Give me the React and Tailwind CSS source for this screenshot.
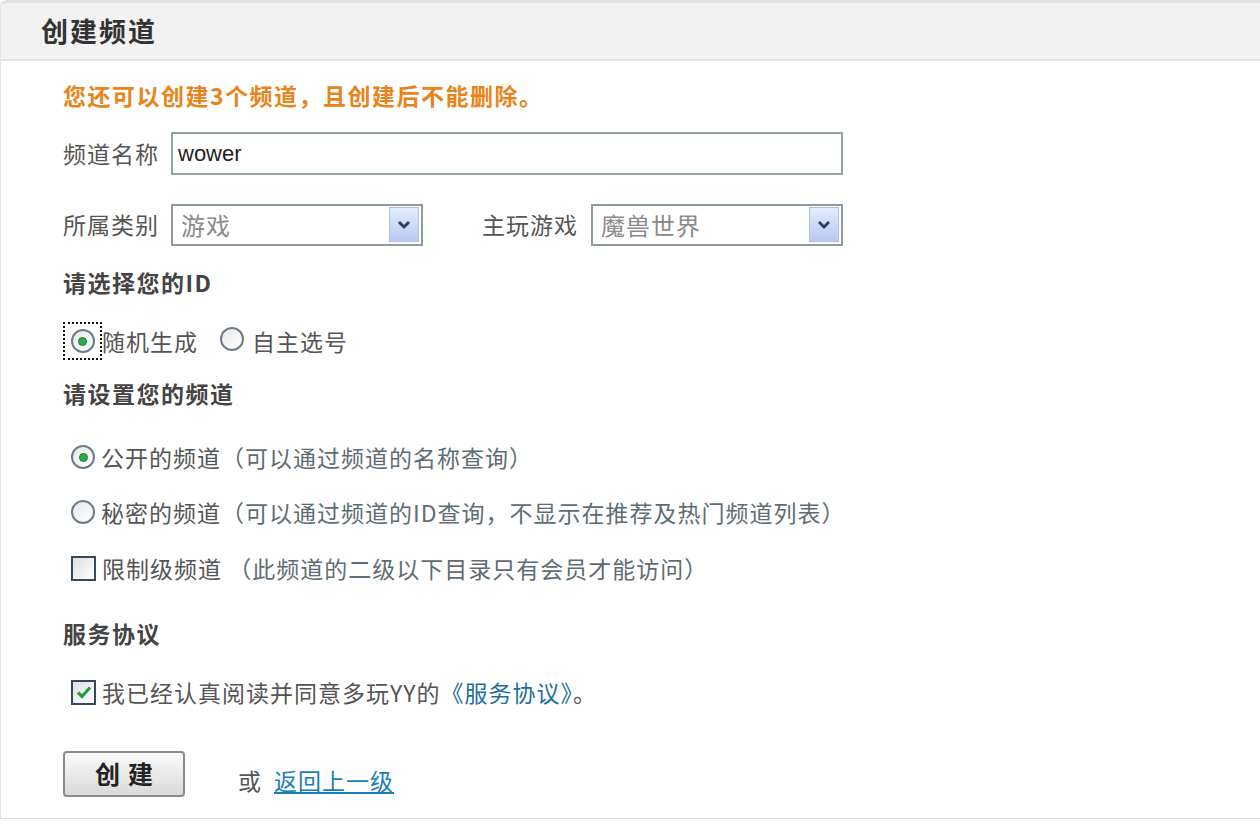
import React from 'react';

const font = { fontFamily: '"Noto Sans CJK SC", "Liberation Sans", sans-serif' };

const Radio = ({ checked }) => (
  <span className="inline-flex w-[24px] h-[24px] rounded-full border-2 border-[#6b7c88] bg-gradient-to-br from-[#e6e9ec] to-white items-center justify-center shrink-0">
    {checked && <span className="w-[9px] h-[9px] rounded-full bg-[#2fa84a] border border-[#1d7d33]"></span>}
  </span>
);

const Checkbox = ({ checked }) => (
  <span className="inline-flex w-[25px] h-[25px] border-2 border-[#34495a] bg-gradient-to-br from-[#dde0e3] to-white items-center justify-center shrink-0">
    {checked && (
      <svg width="16" height="14" viewBox="0 0 16 14">
        <path d="M2 7.5l4 4 8-9" fill="none" stroke="#23a03c" strokeWidth="3.2" />
      </svg>
    )}
  </span>
);

const Select = ({ value, width }) => (
  <div className={`${width} h-[42px] border-2 border-[#8f9c9c] bg-white flex items-center justify-between pl-[8px] pr-[2px]`}>
    <span className="text-[24px] text-[#8a8a8a] tracking-[1px]">{value}</span>
    <span className="w-[30px] h-[35px] bg-gradient-to-b from-[#e4ebfd] to-[#b8c9f2] border border-[#aebfe8] flex items-center justify-center">
      <svg width="14" height="10" viewBox="0 0 14 10">
        <path d="M2 2l5 5 5-5" fill="none" stroke="#2b3d66" strokeWidth="3" />
      </svg>
    </span>
  </div>
);

const App = () => {
  return (
    <div className="w-[1260px] h-[826px] bg-white overflow-hidden" style={font}>
      <div className="border-l border-b border-[#e3e3e3] rounded-tl-[6px]">
        {/* Header */}
        <div className="h-[61px] bg-[#f2f2f2] border-t-[3px] border-b-2 border-[#e2e2e2] rounded-tl-[6px] flex items-center pl-[40px]">
          <h1 className="text-[27px] font-bold text-[#333] tracking-[2px]">创建频道</h1>
        </div>

        <div className="pl-[62px] flex flex-col text-[23px] text-[#555] tracking-[1px]">
          <div className="mt-[17px] h-[34px] flex items-center text-[#e8841a] font-bold tracking-[1.5px]">
            您还可以创建3个频道，且创建后不能删除。
          </div>

          <div className="mt-[20px] h-[43px] flex items-center">
            <span className="w-[108px]">频道名称</span>
            <div className="w-[672px] h-[43px] border-2 border-[#93a3a3] flex items-center pl-[5px] bg-white">
              <span className="text-[22px] text-[#222] tracking-normal" style={{ fontFamily: '"Liberation Sans", sans-serif' }}>wower</span>
            </div>
          </div>

          <div className="mt-[29px] h-[41px] flex items-center">
            <span className="w-[108px]">所属类别</span>
            <Select value="游戏" width="w-[252px]" />
            <span className="ml-[59px] w-[109px]">主玩游戏</span>
            <Select value="魔兽世界" width="w-[252px]" />
          </div>

          <div className="mt-[21px] h-[32px] flex items-center font-bold text-[#444] tracking-[1.5px]">请选择您的ID</div>

          <div className="mt-[24px] h-[38px] flex items-center">
            <span className="w-[39px] h-[38px] border-2 border-dotted border-[#111] flex items-center justify-center">
              <Radio checked />
            </span>
            <span>随机生成</span>
            <span className="ml-[22px] mr-[8px]"><Radio /></span>
            <span>自主选号</span>
          </div>

          <div className="mt-[17px] h-[32px] flex items-center font-bold text-[#444] tracking-[1.5px]">请设置您的频道</div>

          <div className="mt-[32px] h-[32px] flex items-center pl-[8px] gap-[6px]">
            <Radio checked />
            <span>公开的频道<span className="text-[#5e6d73]">（可以通过频道的名称查询）</span></span>
          </div>

          <div className="mt-[23px] h-[32px] flex items-center pl-[8px] gap-[6px]">
            <Radio />
            <span>秘密的频道<span className="text-[#5e6d73]">（可以通过频道的ID查询，不显示在推荐及热门频道列表）</span></span>
          </div>

          <div className="mt-[24px] h-[32px] flex items-center pl-[8px] gap-[6px]">
            <Checkbox />
            <span>限制级频道 <span className="text-[#5e6d73]">（此频道的二级以下目录只有会员才能访问）</span></span>
          </div>

          <div className="mt-[33px] h-[32px] flex items-center font-bold text-[#444] tracking-[1.5px]">服务协议</div>

          <div className="mt-[27px] h-[32px] flex items-center pl-[8px] gap-[6px]">
            <Checkbox checked />
            <span>我已经认真阅读并同意多玩YY的<span className="text-[#1d6f9c]">《服务协议》</span>。</span>
          </div>

          <div className="mt-[43px] h-[46px] flex items-center">
            <button className="w-[122px] h-[46px] rounded-[4px] border-2 border-[#8c8c8c] bg-gradient-to-b from-[#fbfbfb] to-[#d9d9d9] text-[25px] font-bold text-[#222] tracking-[8px] pl-[8px]">
              创建
            </button>
            <span className="ml-[53px] mt-[12px]">或</span>
            <a href="#" className="ml-[12px] mt-[12px] text-[#1a7db5] underline">返回上一级</a>
          </div>

          <div className="h-[21px]"></div>
        </div>
      </div>
    </div>
  );
};

export default App;
